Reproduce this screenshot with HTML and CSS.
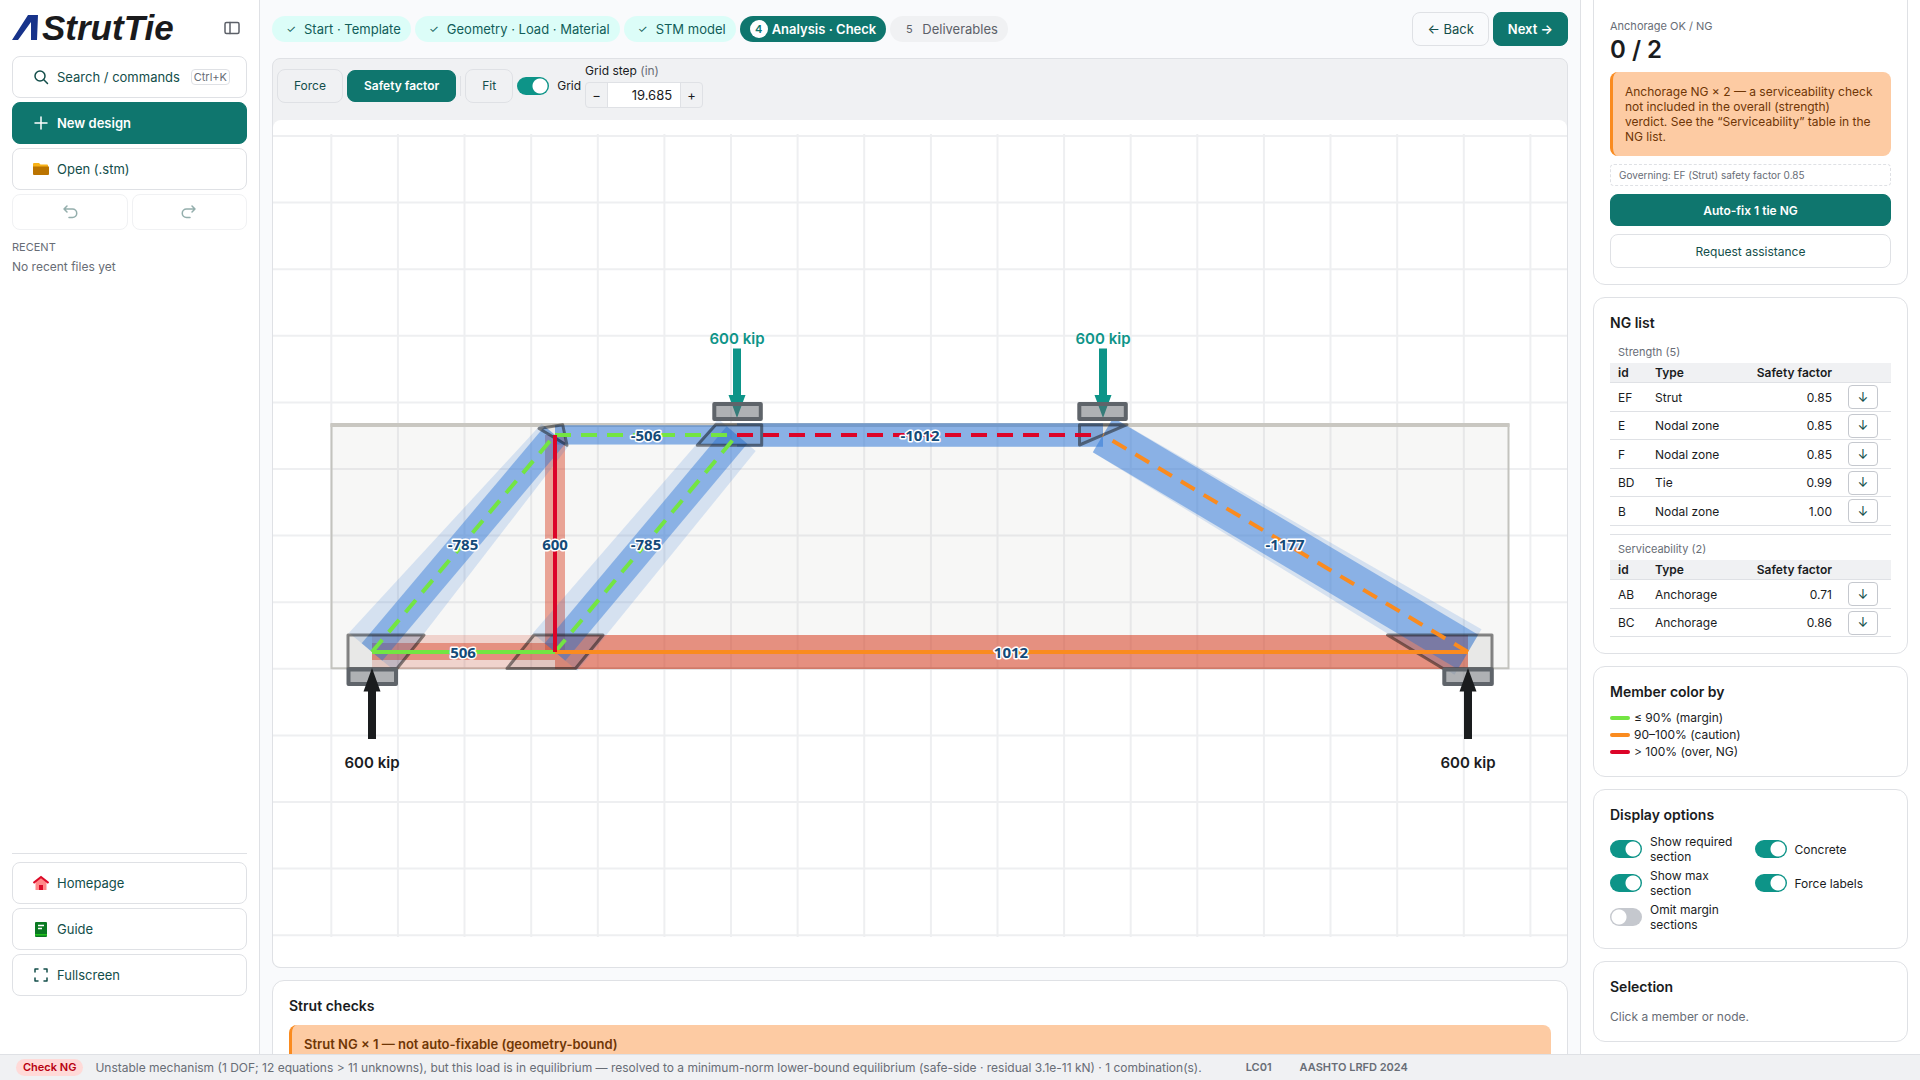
FILE: index.html
```html
<!DOCTYPE html>
<html lang="en">
<head>
<meta charset="utf-8">
<meta name="viewport" content="width=device-width, initial-scale=1">
<title>AStrutTie</title>
<link rel="stylesheet" href="styles.css">
</head>
<body>
<div class="app">
  <div class="columns">
    <nav class="sidebar" aria-label="Main">
      <div class="brand">
        <div class="logo">
          <svg class="logo-mark" viewBox="0 0 26 26" aria-hidden="true"><path d="M16 0h10l-1 25h-6V7L6 25H0z" fill="#17338a"/></svg>
          <span class="logo-text">StrutTie</span>
        </div>
        <button class="icon-btn" type="button" aria-label="Collapse sidebar">
          <svg viewBox="0 0 16 16" class="ico line"><rect x="1" y="2.500" width="14" height="11" rx="1.500"/><path d="M6 2.500v11"/></svg>
        </button>
      </div>
      <button class="btn nav-btn" type="button">
        <svg viewBox="0 0 16 16" class="ico line"><circle cx="7" cy="7" r="5"/><path d="M10.800 10.800l3.700 3.700"/></svg>
        <span>Search / commands</span><kbd>Ctrl+K</kbd>
      </button>
      <button class="btn nav-btn primary" type="button">
        <svg viewBox="0 0 16 16" class="ico line"><path d="M8 2v12M2 8h12"/></svg>
        <span>New design</span>
      </button>
      <button class="btn nav-btn" type="button">
        <svg viewBox="0 0 16 16" class="ico"><path d="M1 2h5l1.500 1.500H14a1 1 0 0 1 1 1V6H0V3a1 1 0 0 1 1-1z" fill="#f8b218"/><path d="M0 5.500h16V13a1 1 0 0 1-1 1H1a1 1 0 0 1-1-1z" fill="#bb7400"/></svg>
        <span>Open (.stm)</span>
      </button>
      <div class="history">
        <button class="btn" type="button" disabled aria-label="Undo"><svg viewBox="0 0 16 16" class="ico line"><path d="M5 2L2 5l3 3M2 5h8.500a4 4 0 0 1 0 8.500H7"/></svg></button>
        <button class="btn" type="button" disabled aria-label="Redo"><svg viewBox="0 0 16 16" class="ico line"><path d="M11 2l3 3-3 3M14 5H5.500a4 4 0 0 0 0 8.500H9"/></svg></button>
      </div>
      <h2 class="recent-title">RECENT</h2>
      <p class="recent-empty">No recent files yet</p>
      <div class="nav-bottom">
        <a class="btn nav-btn" href="#home">
          <svg viewBox="0 0 16 16" class="ico"><path d="M2.500 7L8 2.500 13.500 7v8h-11z" fill="#ff8a8a"/><path d="M6 10h4v5H6z" fill="#dc0a28"/><path d="M.5 8L8 2l7.500 6" fill="none" stroke="#dc0a28" stroke-width="2"/></svg>
          <span>Homepage</span></a>
        <a class="btn nav-btn" href="#guide">
          <svg viewBox="0 0 16 16" class="ico"><rect x="2" y="1" width="12" height="15" rx="1" fill="#0a7a22"/><path d="M2 13h12v1.500H2z" fill="#22c01e"/><path d="M5 4.500h6M5 7.500h4" stroke="#fff" stroke-width="1.300"/></svg>
          <span>Guide</span></a>
        <button class="btn nav-btn" type="button">
          <svg viewBox="0 0 16 16" class="ico line"><path d="M2 5V2h3M11 2h3v3M14 11v3h-3M5 14H2v-3"/></svg>
          <span>Fullscreen</span></button>
      </div>
    </nav>

    <main class="main">
      <header class="topbar">
        <ol class="steps">
          <li><a class="step done" href="#start"><span class="mark">✓</span>Start · Template</a></li>
          <li><a class="step done" href="#geometry"><span class="mark">✓</span>Geometry · Load · Material</a></li>
          <li><a class="step done" href="#model"><span class="mark">✓</span>STM model</a></li>
          <li><a class="step current" href="#analysis" aria-current="step"><span class="mark">4</span>Analysis · Check</a></li>
          <li><a class="step" href="#deliverables"><span class="mark">5</span>Deliverables</a></li>
        </ol>
        <div class="pager">
          <button class="btn clear" type="button">← Back</button>
          <button class="btn primary" type="button">Next →</button>
        </div>
      </header>

      <section class="canvas-card">
        <div class="toolbar">
          <button class="btn clear" type="button">Force</button>
          <button class="btn primary slim" type="button">Safety factor</button>
          <span class="divider"></span>
          <button class="btn clear" type="button">Fit</button>
          <label class="switch"><input type="checkbox" checked><span>Grid</span></label>
          <div class="grid-step">
            <label for="grid-step">Grid step <span class="muted">(in)</span></label>
            <div class="stepper">
              <button type="button" aria-label="Decrease">−</button>
              <input id="grid-step" type="text" value="19.685">
              <button type="button" aria-label="Increase">+</button>
            </div>
          </div>
        </div>
        <div class="canvas">
          <svg viewBox="273 120 1294 847" role="img" aria-label="Strut and tie model">
            <path class="grid-line" d="M273 136h1294M273 202.600h1294M273 269.200h1294M273 335.800h1294M273 402.400h1294M273 469h1294M273 535.600h1294M273 602.200h1294M273 668.800h1294M273 735.400h1294M273 802h1294M273 868.600h1294M273 935.200h1294"/>
            <path class="grid-line" d="M331.300 134v803M397.900 134v803M464.500 134v803M531.200 134v803M597.800 134v803M664.400 134v803M731 134v803M797.600 134v803M864.200 134v803M930.900 134v803M997.500 134v803M1064.100 134v803M1130.700 134v803M1197.300 134v803M1263.900 134v803M1330.500 134v803M1397.200 134v803M1463.800 134v803M1530.400 134v803"/>
            <rect class="concrete" x="331.500" y="424.700" width="1177" height="243.600"/>
            <path class="concrete-top" d="M330.500 425h1179"/>

            <g class="tie-max">
              <path d="M372 635h183v34H372zM555 635h913v34H555z"/>
            </g>
            <g class="tie-need">
              <path d="M545 435h20v217h-20z"/><path d="M372 643h183v17H372z"/><path d="M555 635h913v34H555z"/>
            </g>
            <g class="strut-max">
              <path d="M349 632.700L395 671.300 568.400 446.300 541.600 423.700z"/>
              <path d="M532.800 633.300L577.200 670.700 755.700 451.100 718.300 418.900z"/>
              <path d="M555 425.300h182v19.300H555z"/><path d="M737 423.300h366v23.400H737z"/>
              <path d="M1113.200 417.800L1481.500 629.200 1454.500 674.800 1092.800 452.200z"/>
            </g>
            <g class="strut-need">
              <path d="M361.700 643.300L382.300 660.700 565.300 443.700 544.700 426.300z"/>
              <path d="M544.700 643.300L565.300 660.700 747.300 443.700 726.700 426.300z"/>
              <path d="M555 425.300h182v19.300H555z"/><path d="M737 423.300h366v23.400H737z"/>
              <path d="M1113.200 417.800L1478.200 634.800 1457.800 669.200 1092.800 452.200z"/>
            </g>
            <g class="node-zone">
              <path d="M348 635H424L397 668.500H348z"/>
              <path d="M534 635H603L575.500 668.500H507z"/>
              <path d="M1387.500 635H1492V668.500H1443z"/>
              <path d="M539 428.500L562.700 424.700 567 445.300z"/>
              <path d="M715.700 424.700H761.700V445.300H697.300z"/>
              <path d="M1079.500 424.700H1127L1079.500 445z"/>
            </g>
            <g class="member dashed">
              <path class="ok" d="M372 652L555 435M555 652L737 435M555 435H737"/>
              <path class="over" d="M737 435H1100"/>
              <path class="caution long" d="M1468 652L1103 435"/>
            </g>
            <g class="member">
              <path class="ok" d="M372 652H555"/>
              <path class="caution" d="M555 652H1468"/>
              <path class="over" d="M555 435V652"/>
            </g>

            <g class="load">
              <path d="M733 348.500h8v46.500h4.500L737 418l-8.500-23h4.500z"/>
              <path d="M1099 348.500h8v46.500h4.500L1103 418l-8.500-23h4.500z"/>
            </g>
            <g class="plate">
              <rect x="714.300" y="404" width="46.500" height="15"/><rect x="1079.300" y="404" width="46.500" height="15"/>
              <rect x="348.500" y="669.500" width="47.500" height="14.500"/><rect x="1444.300" y="669.500" width="47.500" height="14.500"/>
            </g>
            <g class="reaction">
              <path d="M372 668l8.500 23.500H376V739h-8v-47.500h-4.500z"/>
              <path d="M1468 668l8.500 23.500H1472V739h-8v-47.500h-4.500z"/>
            </g>
            <g class="force">
              <text x="463" y="550">-785</text><text x="555" y="550">600</text><text x="646" y="550">-785</text>
              <text x="646" y="441">-506</text><text x="920" y="441">-1012</text><text x="1285" y="550">-1177</text>
              <text x="463" y="658">506</text><text x="1011" y="658">1012</text>
            </g>
            <g class="load-label">
              <text class="applied" x="737" y="344">600 kip</text><text class="applied" x="1103" y="344">600 kip</text>
              <text x="372" y="768">600 kip</text><text x="1468" y="768">600 kip</text>
            </g>
          </svg>
        </div>
      </section>

      <section class="card checks">
        <h2>Strut checks</h2>
        <div class="alert"><strong>Strut NG × 1 — not auto-fixable (geometry-bound)</strong></div>
      </section>
    </main>

    <aside class="inspector">
      <section class="card summary">
        <div class="stat"><span class="stat-label">Anchorage OK / NG</span><span class="stat-value">0 / 2</span></div>
        <div class="alert">Anchorage NG × 2 — a serviceability check not included in the overall (strength) verdict. See the “Serviceability” table in the NG list.</div>
        <p class="governing">Governing: EF (Strut) safety factor 0.85</p>
        <button class="btn primary slim" type="button">Auto-fix 1 tie NG</button>
        <button class="btn" type="button">Request assistance</button>
      </section>

      <section class="card ng">
        <h2>NG list</h2>
        <table>
          <caption>Strength (5)</caption>
          <thead><tr><th>id</th><th>Type</th><th class="num">Safety factor</th><th class="act"></th></tr></thead>
          <tbody>
            <tr><td>EF</td><td>Strut</td><td class="num">0.85</td><td class="act"><button type="button" aria-label="Go to EF">↓</button></td></tr>
            <tr><td>E</td><td>Nodal zone</td><td class="num">0.85</td><td class="act"><button type="button" aria-label="Go to E">↓</button></td></tr>
            <tr><td>F</td><td>Nodal zone</td><td class="num">0.85</td><td class="act"><button type="button" aria-label="Go to F">↓</button></td></tr>
            <tr><td>BD</td><td>Tie</td><td class="num">0.99</td><td class="act"><button type="button" aria-label="Go to BD">↓</button></td></tr>
            <tr><td>B</td><td>Nodal zone</td><td class="num">1.00</td><td class="act"><button type="button" aria-label="Go to B">↓</button></td></tr>
          </tbody>
        </table>
        <div class="split">
        <table>
          <caption>Serviceability (2)</caption>
          <thead><tr><th>id</th><th>Type</th><th class="num">Safety factor</th><th class="act"></th></tr></thead>
          <tbody>
            <tr><td>AB</td><td>Anchorage</td><td class="num">0.71</td><td class="act"><button type="button" aria-label="Go to AB">↓</button></td></tr>
            <tr><td>BC</td><td>Anchorage</td><td class="num">0.86</td><td class="act"><button type="button" aria-label="Go to BC">↓</button></td></tr>
          </tbody>
        </table>
        </div>
      </section>

      <section class="card">
        <h2>Member color by</h2>
        <ul class="legend">
          <li><span class="swatch ok"></span>≤ 90% (margin)</li>
          <li><span class="swatch caution"></span>90–100% (caution)</li>
          <li><span class="swatch over"></span>&gt; 100% (over, NG)</li>
        </ul>
      </section>

      <section class="card">
        <h2>Display options</h2>
        <div class="options">
          <label class="switch"><input type="checkbox" checked><span>Show required section</span></label>
          <label class="switch"><input type="checkbox" checked><span>Concrete</span></label>
          <label class="switch"><input type="checkbox" checked><span>Show max section</span></label>
          <label class="switch"><input type="checkbox" checked><span>Force labels</span></label>
          <label class="switch"><input type="checkbox"><span>Omit margin sections</span></label>
        </div>
      </section>

      <section class="card">
        <h2>Selection</h2>
        <p class="hint">Click a member or node.</p>
      </section>
    </aside>
  </div>

  <footer class="statusbar">
    <span class="badge">Check NG</span>
    <span class="message">Unstable mechanism (1 DOF; 12 equations &gt; 11 unknowns), but this load is in equilibrium — resolved to a minimum-norm lower-bound equilibrium (safe-side · residual 3.1e-11 kN) · 1 combination(s).</span>
    <span class="tag">LC01</span>
    <span class="tag">AASHTO LRFD 2024</span>
  </footer>
</div>
</body>
</html>
```
FILE: styles.css
```css
:root {
  --teal: #0f766e;
  --teal-bright: #0d9488;
  --teal-dark: #134e4a;
  --ink: #1a1c1e;
  --muted: #686d76;
  --border: #dfe1e5;
  --surface: #f0f1f3;
  --ok: #73e543;
  --caution: #fa8b1f;
  --over: #dc0428;
}
* { box-sizing: border-box; }
body {
  margin: 0;
  font: 13px/15px Inter, "Liberation Sans", sans-serif;
  color: var(--ink);
  background: #f9fafc;
}
h2, p, ul, ol { margin: 0; padding: 0; }
ul, ol { list-style: none; }
button, input { font: inherit; color: inherit; }
a { color: inherit; text-decoration: none; }

.app { display: flex; flex-direction: column; height: 100vh; }
.columns { flex: 1; min-height: 0; display: grid; grid-template-columns: 260px 1fr 340px; }

.btn {
  display: inline-flex; align-items: center; justify-content: center;
  height: 34px; padding: 0 16px;
  border: 1px solid var(--border); border-radius: 8px;
  background: #fff; color: var(--teal-dark);
  white-space: nowrap;
}
.btn.clear { background: transparent; }
.btn.primary { background: var(--teal); border-color: var(--teal); color: #fff; font-weight: 600; }
.btn.slim { height: 32px; font-size: 12px; }
.btn:disabled { opacity: 0.45; }
.ico { width: 16px; height: 16px; flex: none; display: block; }
.line { fill: none; stroke: currentColor; stroke-width: 1.500; stroke-linecap: round; stroke-linejoin: round; }

/* Sidebar */
.sidebar {
  display: flex; flex-direction: column; gap: 4px;
  padding: 12px 12px 58px;
  background: #fff; border-right: 1px solid var(--border);
}
.brand { display: flex; align-items: center; justify-content: space-between; height: 32px; margin-bottom: 8px; }
.logo { display: flex; align-items: center; gap: 4px; }
.logo-mark { width: 26px; height: 26px; }
.logo-text { font: italic bold 35px/32px "Liberation Sans", Arial, sans-serif; color: #1a1a1c; }
.icon-btn { padding: 0; margin-right: 7px; border: 0; background: none; color: #5c6068; }
.nav-btn { height: 42px; padding: 0 16px 0 20px; justify-content: flex-start; gap: 8px; }
kbd {
  margin-left: auto; padding: 0 2px;
  border: 1px solid var(--border); border-radius: 4px;
  font: 11px/14px Inter, sans-serif; color: var(--muted);
}
.history { display: grid; grid-template-columns: 1fr 1fr; gap: 4px; }
.history .btn { height: 36px; }
.recent-title { margin-top: 6px; font-size: 11px; line-height: 15px; font-weight: 400; color: var(--muted); }
.recent-empty { font-size: 12px; color: var(--muted); }
.nav-bottom { margin-top: auto; display: flex; flex-direction: column; gap: 4px; padding-top: 8px; border-top: 1px solid var(--border); }

/* Main column */
.main { display: flex; flex-direction: column; gap: 12px; min-width: 0; padding: 12px; overflow: hidden; }
.main > * { flex: none; }
.topbar { display: flex; align-items: center; justify-content: space-between; }
.steps, .pager { display: flex; gap: 4px; }
.pager .btn { padding: 0 14px; }
.step {
  display: flex; align-items: center; gap: 4px;
  height: 26px; padding: 0 10px;
  border-radius: 13px; background: var(--surface); color: #5c6068;
}
.step.done { background: #dcfdf8; color: #115e59; }
.step.current { background: var(--teal); color: #fff; font-weight: 600; }
.mark { width: 18px; height: 18px; border-radius: 9px; font-size: 11px; line-height: 18px; text-align: center; }
.current .mark { background: #fff; color: var(--teal); }

.canvas-card { border: 1px solid var(--border); border-radius: 8px; background: var(--surface); overflow: hidden; }
.toolbar { display: flex; align-items: center; gap: 4px; padding: 4px 4px 12px; font-size: 12px; }
.divider { width: 1px; height: 20px; background: var(--border); }
.grid-step { display: flex; flex-direction: column; gap: 4px; }
.stepper { display: flex; height: 26px; border: 1px solid var(--border); border-radius: 4px; overflow: hidden; font-size: 13px; }
.stepper button { width: 21px; padding: 0; border: 0; background: none; }
.stepper input {
  width: 74px; padding: 0 8px; border: solid var(--border); border-width: 0 1px;
  background: #fff; text-align: right;
}
.muted { color: var(--muted); }
.canvas { border-radius: 8px; background: #fff; }
.canvas svg { display: block; width: 100%; height: auto; }

/* Model drawing */
.grid-line { fill: none; stroke: #eeeff1; stroke-width: 2; }
.concrete { fill: rgba(120, 120, 100, 0.060); stroke: #c3c3be; stroke-width: 2; }
.concrete-top { stroke: #c9c7c1; stroke-width: 4; }
.tie-max { fill: #d9482b; fill-opacity: 0.200; }
.tie-need { fill: #d9482b; fill-opacity: 0.480; }
.strut-max { fill: #2f77d8; fill-opacity: 0.170; }
.strut-need { fill: #2f77d8; fill-opacity: 0.450; }
.node-zone { fill: rgba(0, 0, 0, 0.060); stroke: rgba(20, 20, 20, 0.500); stroke-width: 3; stroke-linejoin: round; }
.member { fill: none; stroke-width: 4; }
.member .ok { stroke: var(--ok); }
.member .caution { stroke: var(--caution); }
.member .over { stroke: var(--over); }
.dashed { stroke-dasharray: 16 10; }
.dashed .long { stroke-dasharray: 16 10.500; }
.load { fill: var(--teal-bright); }
.plate { fill: rgba(95, 100, 106, 0.500); stroke: #5f646a; stroke-width: 4; stroke-linejoin: round; }
.reaction { fill: #1a1c1e; }
.force text {
  font: 700 15px "Noto Sans", sans-serif; text-anchor: middle;
  fill: #134a78; stroke: #fff; stroke-width: 3; stroke-linejoin: round; paint-order: stroke;
}
.load-label text { font: 600 15px Inter, sans-serif; text-anchor: middle; fill: var(--ink); }
.load-label .applied { fill: var(--teal-bright); }

/* Cards */
.card { padding: 16px; border: 1px solid var(--border); border-radius: 12px; background: #fff; }
.card h2 { margin-bottom: 8px; font-size: 14px; line-height: 18px; font-weight: 600; }
.checks h2 { margin-bottom: 10px; }
.alert {
  padding: 12px; border-left: 3px solid var(--caution); border-radius: 8px;
  background: #fdcba3; color: #6f3606;
}
.alert strong { font-weight: 600; }

/* Right column */
.inspector {
  display: flex; flex-direction: column; justify-content: flex-end; gap: 12px;
  padding: 12px; overflow: hidden;
  background: #fff; border-left: 1px solid var(--border);
  font-size: 12px;
}
.inspector .card { flex: none; }
.summary { display: flex; flex-direction: column; gap: 8px; padding-top: 40px; }
.summary .alert { padding-right: 16px; }
.stat { display: flex; flex-direction: column; gap: 2px; }
.stat-label { font-size: 11px; color: var(--muted); }
.stat-value { font-size: 24px; line-height: 28px; font-weight: 600; }
.governing {
  padding: 3px 8px; border: 1px dashed var(--border); border-radius: 4px;
  font-size: 10px; line-height: 14px; color: var(--muted);
}
.summary .btn { font-size: 12px; }

table { width: 100%; table-layout: fixed; border-collapse: separate; border-spacing: 0; }
caption { padding: 4px 8px 3px; text-align: left; font-size: 11px; line-height: 16px; color: var(--muted); }
th, td { padding: 0 8px; text-align: left; white-space: nowrap; border-bottom: 1px solid var(--border); }
th { height: 20px; background: var(--surface); font-weight: 600; }
th:nth-child(1) { width: 37px; }
th:nth-child(4) { width: 51px; }
td { height: 29px; }
tr:nth-child(even) td { height: 28px; }
th.num, td.num { text-align: right; }
td.act button {
  display: block; width: 30px; height: 24px; padding: 0;
  border: 1px solid #c5c8ce; border-radius: 4px; background: #fff; color: var(--teal-dark);
  font-size: 13px;
}
.split { margin-top: 8px; padding-top: 2px; border-top: 1px solid var(--border); }

.legend li { display: flex; align-items: center; gap: 4px; height: 17px; }
.swatch { width: 20px; height: 4px; border-radius: 2px; }
.swatch.ok { background: var(--ok); }
.swatch.caution { background: var(--caution); }
.swatch.over { background: var(--over); }

.options { display: grid; grid-template-columns: 1fr 1fr; gap: 4px 8px; padding-top: 2px; }
.switch { display: flex; align-items: center; gap: 8px; }
.switch input {
  appearance: none; flex: none; width: 32px; height: 18px; margin: 0;
  border-radius: 9px; background: radial-gradient(circle at 9px 9px, #fff 7px, transparent 8px) #c5c8ce;
}
.switch input:checked { background: radial-gradient(circle at 23px 9px, #fff 7px, transparent 8px) var(--teal-bright); }
.hint { padding-top: 4px; line-height: 17px; color: var(--muted); }

/* Status bar */
.statusbar {
  display: flex; align-items: center; height: 26px; padding: 0 16px;
  border-top: 1px solid var(--border); background: var(--surface); color: var(--muted);
  white-space: nowrap; font-size: 12px;
}
.badge { padding: 0 7px; border-radius: 9px; background: #ffdad8; color: #b80010; font-size: 11px; line-height: 17px; font-weight: 600; }
.message { margin-left: 12px; }
.tag { margin-left: 44px; font-size: 11px; font-weight: 600; }
.tag + .tag { margin-left: 28px; }
```
